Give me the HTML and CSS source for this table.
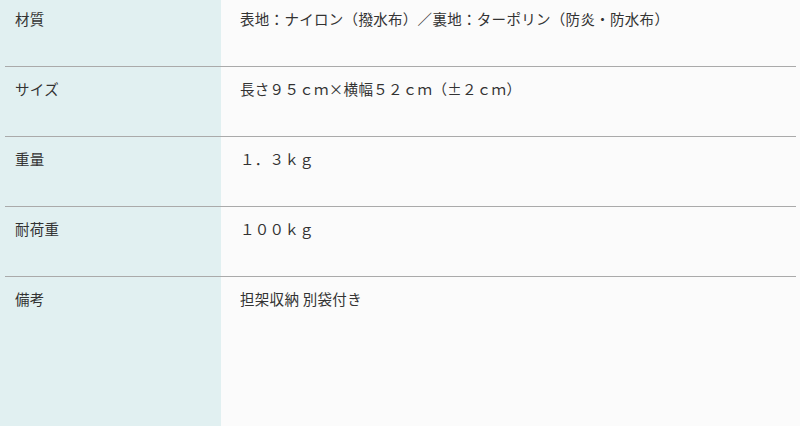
FILE: index.html
```html
<!DOCTYPE html>
<html lang="ja">
<head>
<meta charset="utf-8">
<title>仕様</title>
<link rel="stylesheet" href="styles.css">
</head>
<body>
<dl class="spec">
  <div class="row">
    <dt class="label">材質</dt>
    <dd class="value">表地：ナイロン（撥水布）／裏地：ターポリン（防炎・防水布）</dd>
  </div>
  <div class="row">
    <dt class="label">サイズ</dt>
    <dd class="value">長さ９５ｃｍ×横幅５２ｃｍ（±２ｃｍ）</dd>
  </div>
  <div class="row">
    <dt class="label">重量</dt>
    <dd class="value">１．３ｋｇ</dd>
  </div>
  <div class="row">
    <dt class="label">耐荷重</dt>
    <dd class="value">１００ｋｇ</dd>
  </div>
  <div class="row row-last">
    <dt class="label">備考</dt>
    <dd class="value">担架収納 別袋付き</dd>
  </div>
</dl>
</body>
</html>
```
FILE: styles.css
```css
html, body {
  margin: 0;
  padding: 0;
}
body {
  min-height: 426px;
  background: linear-gradient(to right, #e1f0f1 0, #e1f0f1 221px, #fbfbfb 221px, #fbfbfb 100%);
  font-family: "Noto Sans CJK JP", "Noto Sans", sans-serif;
  font-size: 14.5px;
  letter-spacing: 0.3px;
  line-height: 22px;
  color: #333;
  overflow: hidden;
}
.spec {
  margin: -3px 4px 0 5px;
  padding: 0;
}
.row {
  display: grid;
  grid-template-columns: 216px 1fr;
  box-sizing: border-box;
  height: 70px;
  border-bottom: 1px solid #aaaaaa;
}
.row-last {
  height: 160px;
  border-bottom: none;
}
.label {
  margin: 0;
  padding: 11px 10px;
}
.value {
  margin: 0;
  padding: 11px 19px;
}
```
